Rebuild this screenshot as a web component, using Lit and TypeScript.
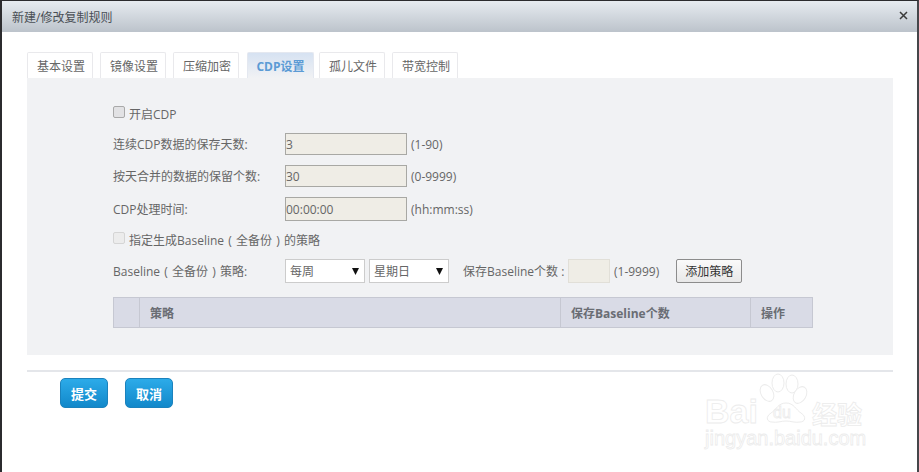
import { LitElement, html, css } from "lit";
import { customElement } from "lit/decorators.js";

const TABS = ["基本设置", "镜像设置", "压缩加密", "CDP设置", "孤儿文件", "带宽控制"];

@customElement("app-root")
export class AppRoot extends LitElement {
  static styles = css`
    :host {
      display: block;
      position: relative;
      width: 919px;
      height: 472px;
      overflow: hidden;
      box-sizing: border-box;
      background: #fff;
      border-top: 1px solid #2b2b2e;
      border-left: 2px solid #2b2b2e;
      border-right: 2px solid #45464a;
      font-family: "Open Sans", "Noto Sans CJK SC", sans-serif;
      font-size: 12px;
      color: #666;
    }
    .head {
      height: 31px;
      display: flex;
      align-items: center;
      justify-content: space-between;
      padding: 0 10px;
      background: linear-gradient(#e6ebf0, #bcc3cb);
      color: #4a4f55;
    }
    .close { width: 9px; height: 9px; display: block; margin: -2px -1px 0 0; }
    .body { padding: 20px 24px 0 25px; }
    .tabs { display: flex; gap: 7px; }
    .tab {
      width: 62px;
      height: 25px;
      padding-left: 2px;
      box-sizing: content-box;
      display: flex;
      align-items: center;
      justify-content: center;
      border: 1px solid #e9e9ec;
      border-bottom: none;
      border-radius: 2px 2px 0 0;
      background: #fff;
      color: #666;
    }
    .tab.on {
      width: 65px;
      padding-left: 0;
      margin: 0 -2px 0 1px;
      border-color: #e4e8f0;
      background: linear-gradient(#d6e2f2, #f1f2f4);
      color: #5b9bd5;
      font-weight: 700;
    }
    .panel {
      height: 277px;
      box-sizing: border-box;
      background: #f1f2f4;
      padding: 26px 80px 0 86px;
    }
    .row { display: flex; align-items: center; height: 22px; margin-bottom: 10px; }
    .row.first { height: 20px; margin-bottom: 9px; }
    .row.tall { height: 24px; margin-bottom: 9px; }
    .row.cb-row { height: 20px; margin-bottom: 9px; }
    .row.opts { height: 24px; margin-bottom: 14px; }
    .cb {
      width: 12px;
      height: 12px;
      box-sizing: border-box;
      margin: -4px 4px 0 0;
      border: 1px solid #a9a9a9;
      border-radius: 2px;
      background: #e2e2e4;
      flex: none;
    }
    .cb.off { border-color: #d5d5d5; background: #ececec; }
    .label { width: 172px; flex: none; }
    .paren { display: inline-block; width: 12px; text-align: center; }
    .field {
      width: 122px;
      height: 100%;
      box-sizing: border-box;
      border: 1px solid #a8a8a4;
      background: #efede6;
      display: flex;
      align-items: center;
      flex: none;
    }
    .unit { margin-left: 4px; }
    .select {
      width: 80px;
      height: 100%;
      box-sizing: border-box;
      border: 1px solid #ccc;
      background: #fff;
      display: flex;
      align-items: center;
      justify-content: space-between;
      padding: 0 5px 0 4px;
      margin-right: 4px;
      flex: none;
    }
    .arrow { width: 7px; height: 7px; display: block; }
    .save { margin-left: 10px; width: 105px; flex: none; white-space: nowrap; }
    .small {
      width: 42px;
      height: 100%;
      box-sizing: border-box;
      border: 1px solid #e1dfd8;
      background: #efede6;
      flex: none;
    }
    .add {
      margin-left: 17px;
      width: 66px;
      height: 100%;
      box-sizing: border-box;
      border: 1px solid #8c8c8c;
      border-radius: 2px;
      background: linear-gradient(#fafafa, #e8e8e8);
      color: #333;
      display: flex;
      align-items: center;
      justify-content: center;
    }
    .table {
      width: 700px;
      height: 31px;
      box-sizing: border-box;
      display: grid;
      grid-template-columns: 26px 421px 190px 63px;
      background: #d9dbe6;
      border-top: 1px solid #c6c8d2;
      border-bottom: 1px solid #c6c8d2;
      font-weight: 700;
      color: #6a6d74;
    }
    .th {
      display: flex;
      align-items: center;
      padding-left: 10px;
      border-left: 1px solid #c6c8d2;
    }
    .th:last-child { border-right: 1px solid #c6c8d2; }
    .rule { height: 2px; background: #e4e6ea; margin-top: 15px; }
    .actions { display: flex; gap: 17px; padding: 6px 0 0 33px; }
    .btn {
      width: 48px;
      height: 30px;
      box-sizing: border-box;
      border: 1px solid #1b82bd;
      border-radius: 5px;
      background: linear-gradient(#2cabe9, #1288ca);
      color: #fff;
      font-weight: 700;
      font-size: 13px;
      display: flex;
      align-items: center;
      justify-content: center;
    }
    .mark { position: absolute; left: 698px; top: 372px; width: 180px; height: 85px; display: block; }
    .mark * { fill: #fff; stroke: #ececec; stroke-width: 1; }
    .mark text { font-family: "Liberation Sans", "Noto Sans CJK SC", sans-serif; stroke-width: 0.8; }
    .w-big { font-size: 34px; font-weight: 700; }
    .w-du { font-size: 16px; }
    .w-cn { font-size: 25px; font-weight: 700; }
    .w-url { font-size: 20px; }
  `;

  render() {
    return html`
      <div class="head">
        <span>新建/修改复制规则</span>
        <svg class="close" viewBox="0 0 9 9">
          <path d="M1 1l7 7M8 1l-7 7" stroke="#3a3a3a" stroke-width="1.5" fill="none" />
        </svg>
      </div>
      <div class="body">
        <div class="tabs">
          ${TABS.map((t, i) => html`<div class="tab ${i === 3 ? "on" : ""}">${t}</div>`)}
        </div>
        <div class="panel">
          <div class="row first"><span class="cb"></span>开启CDP</div>
          <div class="row">
            <span class="label">连续CDP数据的保存天数:</span>
            <span class="field">3</span><span class="unit">(1-90)</span>
          </div>
          <div class="row">
            <span class="label">按天合并的数据的保留个数:</span>
            <span class="field">30</span><span class="unit">(0-9999)</span>
          </div>
          <div class="row tall">
            <span class="label">CDP处理时间:</span>
            <span class="field">00:00:00</span><span class="unit">(hh:mm:ss)</span>
          </div>
          <div class="row cb-row">
            <span class="cb off"></span>
            <span>指定生成Baseline<span class="paren">(</span>全备份<span class="paren">)</span>的策略</span>
          </div>
          <div class="row opts">
            <span class="label">Baseline<span class="paren">(</span>全备份<span class="paren">)</span>策略:</span>
            <span class="select">每周${this.arrow()}</span>
            <span class="select">星期日${this.arrow()}</span>
            <span class="save">保存Baseline个数 :</span>
            <span class="small"></span><span class="unit">(1-9999)</span>
            <span class="add">添加策略</span>
          </div>
          <div class="table">
            <div class="th"></div>
            <div class="th">策略</div>
            <div class="th">保存Baseline个数</div>
            <div class="th">操作</div>
          </div>
        </div>
        <div class="rule"></div>
        <div class="actions">
          <div class="btn">提交</div>
          <div class="btn">取消</div>
        </div>
      </div>
      <svg class="mark" viewBox="0 0 180 85">
        <ellipse cx="67" cy="20" rx="6" ry="9" transform="rotate(-30 67 20)" />
        <ellipse cx="78" cy="10" rx="6" ry="9" />
        <ellipse cx="92" cy="11" rx="6" ry="9" />
        <ellipse cx="100" cy="22" rx="6" ry="9" transform="rotate(30 100 22)" />
        <path d="M86 30c8 0 10 7 15 10 6 4 4 9-1 9-5 1-9-1-14-1s-9 2-14 1c-5 0-7-5-1-9 5-3 7-10 15-10z" />
        <text class="w-big" x="5" y="50">Bai</text>
        <text class="w-du" x="73" y="45">du</text>
        <text class="w-cn" x="112" y="51">经验</text>
        <text class="w-url" x="5" y="72">jingyan.baidu.com</text>
      </svg>
    `;
  }

  arrow() {
    return html`<svg class="arrow" viewBox="0 0 7 7"><path d="M0 0h7L3.5 7z" fill="#111" /></svg>`;
  }
}
